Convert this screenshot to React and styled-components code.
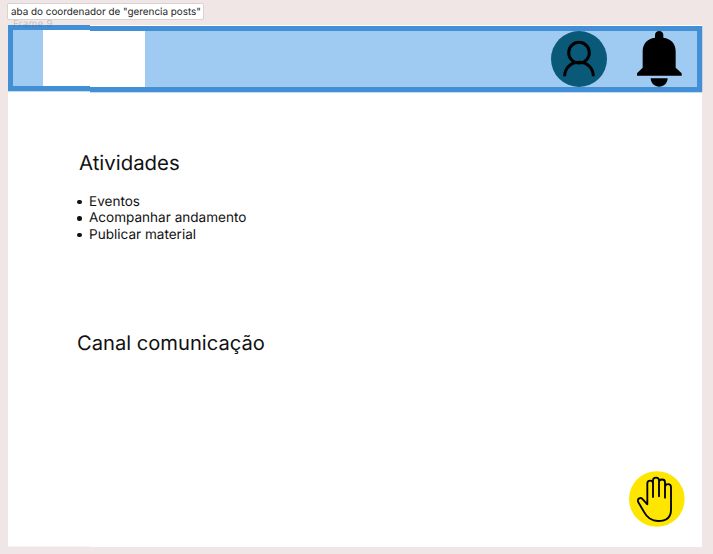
import React from "react";
import styled, { createGlobalStyle } from "styled-components";

const GlobalStyle = createGlobalStyle`
  * { box-sizing: border-box; }
  body { margin: 0; background: #f0e6e5; font-family: Inter, sans-serif; color: #111; text-rendering: geometricPrecision; }
`;

const Canvas = styled.main`
  position: relative;
  width: 713px;
  height: 554px;
  padding: 25px 11px 7px 8px;
  overflow: hidden;
`;

const Tooltip = styled.div`
  position: absolute;
  z-index: 3;
  left: 7px;
  top: 3px;
  width: 197px;
  height: 17px;
  padding-left: 3px;
  border: 1px solid #d9d2d2;
  border-radius: 2px;
  background: #fff;
  color: #222;
  font-size: 9.9px;
  line-height: 16px;
  white-space: nowrap;
`;

const FrameName = styled.span`
  position: absolute;
  z-index: 2;
  left: 13px;
  top: 18px;
  font-size: 10px;
  line-height: 12px;
  letter-spacing: 0.2px;
  color: rgba(80, 75, 75, 0.27);
`;

const Frame = styled.section`
  display: flex;
  flex-direction: column;
  width: 694px;
  height: 522px;
  background: linear-gradient(#f8f3f2, #f8f3f2) 0 100% / 82px 1px no-repeat, #fff;
`;

const Header = styled.header`
  display: flex;
  height: 67px;
  flex: none;
`;

const HeaderStart = styled.div`
  display: flex;
  justify-content: flex-end;
  width: 82px;
  height: 66px;
  border: 5px solid #438fd5;
  border-right: 0;
  background: #9fcaf2;
  box-shadow: 0 1px #c2dcf3;
`;

const HeaderEnd = styled.div`
  display: flex;
  width: 612px;
  height: 66px;
  margin-top: 1px;
  border: 5px solid #438fd5;
  border-left: 0;
  background: #9fcaf2;
  box-shadow: 0 1px #c2dcf3, 1px 0 #c6d3e2;
`;

const LogoSpace = styled.div`
  width: ${(p) => p.$width}px;
  background: #fff;
`;

const Actions = styled.nav`
  display: flex;
  gap: 30px;
  margin-left: auto;
  padding-right: 15px;
`;

const Icon = styled.svg`
  display: block;
  flex: none;
  width: ${(p) => p.$width}px;
  height: 56px;
`;

const Content = styled.div`
  display: flex;
  flex: 1;
  flex-direction: column;
  padding: 57px 17px 20px 69px;
`;

const Title = styled.h2`
  margin: 0 0 0 ${(p) => p.$indent || 0}px;
  font-size: ${(p) => p.$size}px;
  font-weight: 400;
  line-height: 28px;
`;

const List = styled.ul`
  margin: 17px 0 86px;
  padding: 0;
  list-style: none;
  font-size: 13.55px;
  line-height: 16.4px;
`;

const Item = styled.li`
  display: flex;
  align-items: center;
  gap: 7.500px;
  &::before {
    content: "";
    width: 4.5px;
    height: 4.5px;
    border-radius: 50%;
    background: #111;
  }
`;

const HelpButton = styled.button`
  align-self: flex-end;
  margin-top: auto;
  padding: 0;
  border: 0;
  background: none;
`;

export default function App() {
  return (
    <Canvas>
      <GlobalStyle />
      <Tooltip>aba do coordenador de "gerencia posts"</Tooltip>
      <FrameName>Frame 9</FrameName>
      <Frame>
        <Header>
          <HeaderStart>
            <LogoSpace $width={47} />
          </HeaderStart>
          <HeaderEnd>
            <LogoSpace $width={55} />
            <Actions>
              <Icon $width={56} viewBox="33 48 168 168">
                <circle cx="117" cy="132" r="84" fill="#0a5978" />
                <g fill="none" stroke="#000" strokeWidth="9">
                  <circle cx="117" cy="113" r="31" />
                  <path d="M74 184C74 158 93 142 117 142S160 158 160 184" />
                </g>
              </Icon>
              <Icon $width={45} viewBox="291 48 135 168">
                <path d="M345 68V60C345 44 370 44 370 60V68C393 71 407 86 407 109V158L425 175V182H291V175L308 158V109C308 86 322 71 345 68Z" />
                <path d="M332 190H383C382 206 371 215 357.500 215S333 206 332 190Z" />
              </Icon>
            </Actions>
          </HeaderEnd>
        </Header>
        <Content>
          <Title $indent={2} $size={20.4}>Atividades</Title>
          <List>
            <Item>Eventos</Item>
            <Item>Acompanhar andamento</Item>
            <Item>Publicar material</Item>
          </List>
          <Title $size={20.15}>Canal comunicação</Title>
          <HelpButton>
            <Icon $width={56} viewBox="41 33 168 168">
              <circle cx="124.5" cy="117" r="83.5" fill="#ffe600" />
              <path
                d="M96 133V70C96 59 113 59 113 70V111M113 70V61C113 50 131 50 131 61V109M131 66C131 56 149 56 149 66V113M149 82C149 69 167 69 167 82V149C167 172 152 183 128 183C105 183 93 169 85 154L69 127C63 116 77 109 83 119L96 133"
                fill="none"
                stroke="#000"
                strokeWidth="5.5"
                strokeLinecap="round"
                strokeLinejoin="round"
              />
            </Icon>
          </HelpButton>
        </Content>
      </Frame>
    </Canvas>
  );
}
